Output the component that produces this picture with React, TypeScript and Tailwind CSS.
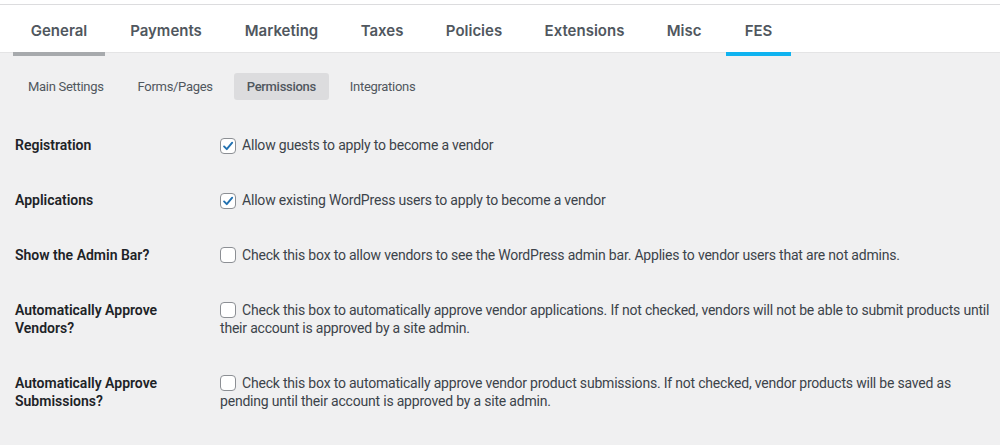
import React from 'react';

const tabs = [
  { label: 'General', w: 'w-[92px]', state: 'parent' },
  { label: 'Payments', w: 'w-[108px]', state: '' },
  { label: 'Marketing', w: 'w-[109px]', state: '' },
  { label: 'Taxes', w: 'w-[78px]', state: '' },
  { label: 'Policies', w: 'w-[92px]', state: '' },
  { label: 'Extensions', w: 'w-[115px]', state: '' },
  { label: 'Misc', w: 'w-[70px]', state: '' },
  { label: 'FES', w: 'w-[65px]', state: 'active' },
];

const subTabs = ['Main Settings', 'Forms/Pages', 'Permissions', 'Integrations'];

interface Setting {
  label: string;
  text: string;
  checked: boolean;
}

const settings: Setting[] = [
  { label: 'Registration', text: 'Allow guests to apply to become a vendor', checked: true },
  { label: 'Applications', text: 'Allow existing WordPress users to apply to become a vendor', checked: true },
  {
    label: 'Show the Admin Bar?',
    text: 'Check this box to allow vendors to see the WordPress admin bar. Applies to vendor users that are not admins.',
    checked: false,
  },
  {
    label: 'Automatically Approve Vendors?',
    text: 'Check this box to automatically approve vendor applications. If not checked, vendors will not be able to submit products until their account is approved by a site admin.',
    checked: false,
  },
  {
    label: 'Automatically Approve Submissions?',
    text: 'Check this box to automatically approve vendor product submissions. If not checked, vendor products will be saved as pending until their account is approved by a site admin.',
    checked: false,
  },
];

function Checkbox({ checked }: { checked: boolean }) {
  return (
    <span className="inline-flex w-4 h-4 mr-[6px] align-[-3px] items-center justify-center rounded-[4px] border border-[#8c8f94] bg-white">
      {checked && (
        <svg width="14" height="14" viewBox="0 0 16 16" fill="none">
          <path d="M3.5 8.5 L6.6 11.6 L12.8 4.2" stroke="#2271b1" strokeWidth="2.2" strokeLinecap="round" strokeLinejoin="round" />
        </svg>
      )}
    </span>
  );
}

export default function App() {
  return (
    <main
      className="min-h-screen w-[1000px] bg-[#f0f0f1] text-[#3c434a]"
      style={{ fontFamily: 'Roboto, "Noto Sans", sans-serif' }}
    >
      {/* Top tab bar */}
      <div className="pt-1 bg-white">
        <div className="h-[49px] bg-white border-t border-b border-[#dcdcde] border-b-[#e4e4e5]">
          <nav className="flex gap-[7px] pl-[13px] font-['Inter',sans-serif]">
            {tabs.map(tab => (
              <a
                key={tab.label}
                className={`${tab.w} h-[51px] pt-[16px] text-center text-[15px] leading-5 font-semibold text-[#50575e] border-b-4 ${
                  tab.state === 'active'
                    ? 'border-[#0fb3f0]'
                    : tab.state === 'parent'
                    ? 'border-[#a7aaad]'
                    : 'border-transparent'
                }`}
              >
                {tab.label}
              </a>
            ))}
          </nav>
        </div>
      </div>

      {/* Sub tabs */}
      <div className="flex gap-2 pl-[15px] pt-5 tracking-[-0.3px]">
        {subTabs.map(s => (
          <a
            key={s}
            className={`h-[27px] px-[13px] flex items-center rounded-[3px] text-[13px] text-[#50575e] ${
              s === 'Permissions' ? 'bg-[#dcdcde] font-medium' : ''
            }`}
          >
            {s}
          </a>
        ))}
      </div>

      {/* Settings table */}
      <div className="mt-[18px] pl-[15px]">
        {settings.map(row => (
          <div key={row.label} className="flex pt-[18px] pb-[19px] text-[14px] leading-[18px]">
            <div className="w-[205px] shrink-0 pr-5 font-semibold text-[#1d2327]">{row.label}</div>
            <div className="flex-1 tracking-[-0.2px]">
              <Checkbox checked={row.checked} />
              {row.text}
            </div>
          </div>
        ))}
      </div>
    </main>
  );
}
